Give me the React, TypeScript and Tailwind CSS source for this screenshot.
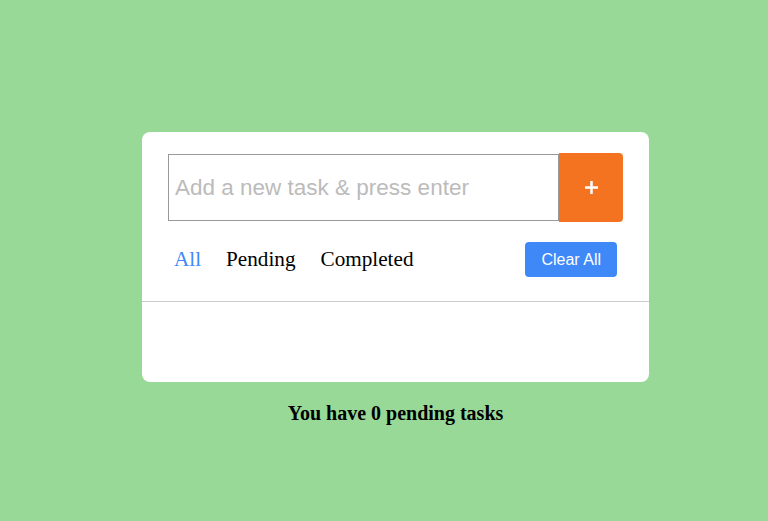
export default function App() {
  return (
    <main className="flex min-h-[521px] w-full flex-col items-center bg-[#98d998] pl-[23px] pt-[132px]">
      <div className="flex w-[507px] flex-col rounded-lg bg-white">
        <div className="flex px-[26px] pt-[22px]">
          <input
            type="text"
            placeholder="Add a new task & press enter"
            className="h-[67px] min-w-0 flex-1 border border-[#999] px-[6px] font-['Liberation_Sans',sans-serif] text-[22.5px] text-black outline-none placeholder:text-[#bbb]"
          />
          <button className="-my-px flex h-[69px] w-[64px] items-center justify-center rounded-r bg-[#f37321] text-white">
            <svg width="15" height="15" viewBox="0 0 15 15">
              <path d="M7.5 1v13M1 7.5h13" stroke="currentColor" strokeWidth="2.5" />
            </svg>
          </button>
        </div>
        <div className="flex items-center justify-between pl-[32px] pr-[32px] pb-[24px] pt-[21px]">
          <div className="flex gap-[25px] pt-px font-['Liberation_Serif',serif] text-[21.2px]">
            <span className="text-[#3f88f8]">All</span>
            <span className="text-black">Pending</span>
            <span className="text-black">Completed</span>
          </div>
          <button className="h-[35px] rounded bg-[#3f88f8] px-[16px] font-['Liberation_Sans',sans-serif] text-[16px] text-white">
            Clear All
          </button>
        </div>
        <div className="h-[81px] border-t border-[#ccc]" />
      </div>
      <p className="mt-[16px] font-['Liberation_Serif',serif] text-[20px] font-bold text-black">
        You have 0 pending tasks
      </p>
    </main>
  );
}
